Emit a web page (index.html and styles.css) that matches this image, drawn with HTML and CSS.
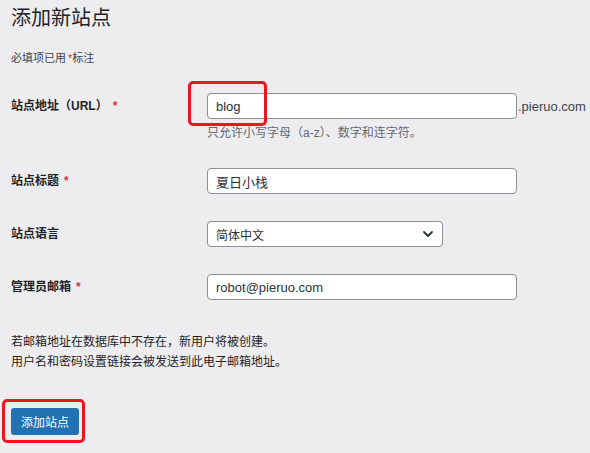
FILE: index.html
```html
<!DOCTYPE html>
<html lang="zh-CN">
<head>
  <meta charset="UTF-8" />
  <meta name="viewport" content="width=device-width, initial-scale=1" />
  <title>添加新站点</title>
  <link rel="stylesheet" href="styles.css">
</head>
<body>
  <div class="wrap">
    <h1>添加新站点</h1>
    <p class="required-note">必填项已用<span class="req">*</span>标注</p>

    <form class="site-form">
      <div class="row">
        <label for="site-address">站点地址（URL）<span class="req">*</span></label>
        <div class="field">
          <div class="address-line">
            <span class="mark-wrap">
              <input type="text" id="site-address" class="text-input" value="blog" />
              <span class="highlight highlight-input"></span>
            </span>
            <span class="domain">.pieruo.com</span>
          </div>
          <p class="hint">只允许小写字母（a-z）、数字和连字符。</p>
        </div>
      </div>

      <div class="row">
        <label for="site-title">站点标题<span class="req">*</span></label>
        <div class="field">
          <input type="text" id="site-title" class="text-input" value="夏日小栈" />
        </div>
      </div>

      <div class="row">
        <label for="site-lang">站点语言</label>
        <div class="field">
          <div class="select-box" id="site-lang">
            <span>简体中文</span>
            <svg class="chevron" width="12" height="8" viewBox="0 0 12 8">
              <path d="M2 2 L6 6 L10 2" fill="none" stroke="#2c3338" stroke-width="1.8" stroke-linecap="round" stroke-linejoin="round" />
            </svg>
          </div>
        </div>
      </div>

      <div class="row">
        <label for="admin-email">管理员邮箱<span class="req">*</span></label>
        <div class="field">
          <input type="text" id="admin-email" class="text-input" value="robot@pieruo.com" />
        </div>
      </div>

      <p class="notice">若邮箱地址在数据库中不存在，新用户将被创建。<br />用户名和密码设置链接会被发送到此电子邮箱地址。</p>

      <span class="mark-wrap btn-wrap">
        <button type="button" class="primary-btn">添加站点</button>
        <span class="highlight highlight-btn"></span>
      </span>
    </form>
  </div>
</body>
</html>
```

FILE: styles.css
```css
* {
  box-sizing: border-box;
}

html, body {
  margin: 0;
  height: 100%;
  background: #ededf0;
  font-family: "Liberation Sans", "Noto Sans CJK SC", sans-serif;
  color: #1d2327;
  overflow: hidden;
}

.wrap {
  padding: 5px 0 0 11px;
}

h1 {
  margin: 0;
  font-size: 20px;
  line-height: 26px;
  font-weight: 400;
  color: #1d2327;
}

.required-note {
  margin: 19px 0 0;
  font-size: 11px;
  line-height: 16px;
  color: #3c434a;
}

.req {
  color: #d63638;
  margin-left: 2px;
}

.site-form {
  margin-top: 27px;
}

.row {
  display: grid;
  grid-template-columns: 196px 1fr;
  align-items: start;
  margin-bottom: 27px;
}

.row label {
  font-size: 12px;
  font-weight: 700;
  line-height: 26px;
}

.row label .req {
  margin-left: 5px;
}

.address-line {
  display: flex;
  align-items: center;
}

.mark-wrap {
  position: relative;
  display: inline-block;
}

.text-input {
  display: block;
  width: 310px;
  height: 26px;
  padding: 0 8px;
  border: 1px solid #8c8f94;
  border-radius: 4px;
  background: #fff;
  font-family: inherit;
  font-size: 13px;
  color: #2c3338;
  outline: none;
}

.domain {
  margin-left: 1px;
  font-size: 13px;
  color: #3c434a;
}

.hint {
  margin: 6px 0 0;
  font-size: 12px;
  line-height: 16px;
  color: #646970;
}

.select-box {
  display: flex;
  align-items: center;
  justify-content: space-between;
  width: 236px;
  height: 26px;
  padding: 0 8px;
  border: 1px solid #8c8f94;
  border-radius: 4px;
  background: #fff;
  font-size: 12px;
  color: #2c3338;
}

.notice {
  margin: 32px 0 0;
  font-size: 12px;
  line-height: 20px;
  color: #1d2327;
}

.btn-wrap {
  margin-top: 36px;
}

.primary-btn {
  display: block;
  height: 27px;
  padding: 0 10px;
  border: none;
  border-radius: 3px;
  background: #2271b1;
  color: #fff;
  font-family: inherit;
  font-size: 12px;
}

/* red annotation boxes */
.highlight {
  position: absolute;
  border: 3px solid #f0141e;
  border-radius: 5px;
  pointer-events: none;
}

.highlight-input {
  left: -19px;
  top: -12px;
  width: 79px;
  height: 45px;
}

.highlight-btn {
  left: -9px;
  top: -9px;
  width: 83px;
  height: 44px;
}
```
